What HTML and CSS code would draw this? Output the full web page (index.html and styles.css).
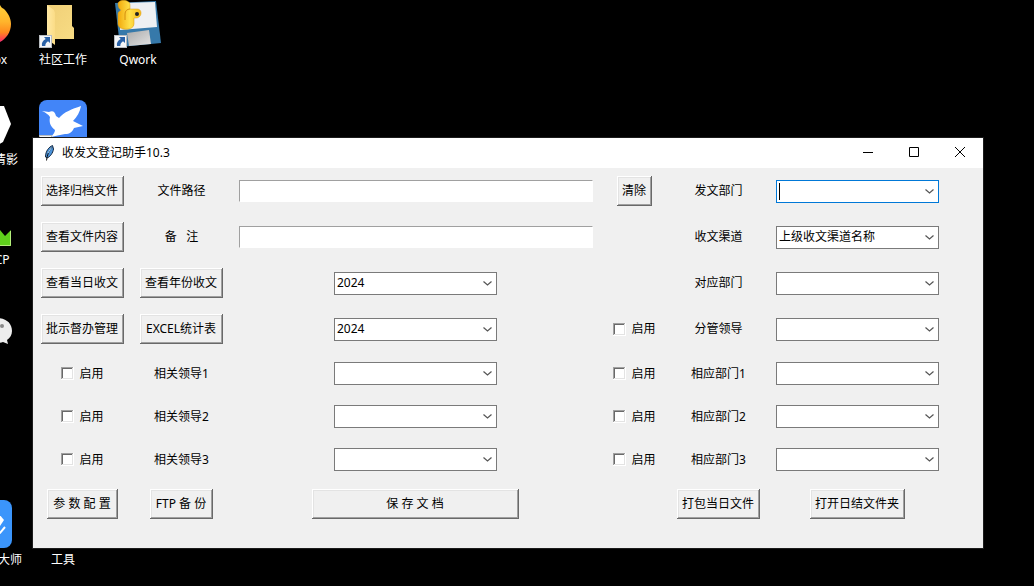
FILE: index.html
```html
<!DOCTYPE html>
<html lang="zh-CN">
<head>
  <meta charset="utf-8">
  <title>收发文登记助手10.3</title>
  <link rel="stylesheet" href="styles.css">
</head>
<body>
  <svg class="defs" width="0" height="0" aria-hidden="true">
    <defs>
      <linearGradient id="fire" x1="0" y1="0" x2="0" y2="1">
        <stop offset="0" stop-color="#ffd23a" />
        <stop offset=".45" stop-color="#ffb52c" />
        <stop offset=".7" stop-color="#ff8a1e" />
        <stop offset=".85" stop-color="#ff4a4a" />
        <stop offset="1" stop-color="#e0189a" />
      </linearGradient>
      <linearGradient id="folder" x1="0" y1="0" x2="1" y2="1">
        <stop stop-color="#f0cf77" />
        <stop offset="1" stop-color="#f8dc84" />
      </linearGradient>
      <linearGradient id="flap" x1="0" y1="0" x2="1" y2="0">
        <stop stop-color="#ffe9a4" />
        <stop offset="1" stop-color="#fbdc86" />
      </linearGradient>
      <linearGradient id="metal" x1="0" y1="0" x2="1" y2="1">
        <stop stop-color="#aaa" />
        <stop offset="1" stop-color="#e2e2e2" />
      </linearGradient>
      <linearGradient id="snake" x1="0" y1="0" x2="1" y2="0">
        <stop stop-color="#f2a90c" />
        <stop offset=".5" stop-color="#ffe04a" />
        <stop offset="1" stop-color="#f9bd18" />
      </linearGradient>
      <symbol id="shortcut" viewBox="0 0 13 13">
        <rect x=".5" y=".5" width="12" height="12" fill="#f4f6f8" stroke="#b8bcc0" />
        <path d="M5 2h6v6L9 6.300C7.200 7.500 6.300 9 6.300 11H3C2.300 8 3.800 5.500 6.700 4z" fill="#2a62a8" />
      </symbol>
    </defs>
  </svg>

  <div class="desktop">
    <div class="shortcut col-1 row-1">
      <svg viewBox="0 0 48 48"><path d="M36 5c1 2 2 3 4 4 4 4 7 9 7 15 0 8-5 15-11 18C20 50 0 40 0 24S20-2 36 5z" fill="url(#fire)" /></svg>
      <span>Firefox</span>
    </div>
    <div class="shortcut col-1 row-2 label-cut">
      <svg viewBox="0 0 48 48"><path d="M8 6h32l7 18-8 18-5 3H8L0 24z" fill="#fff" /></svg>
      <span>清影</span>
    </div>
    <div class="shortcut col-1 row-3">
      <svg viewBox="0 0 48 48"><path d="M20 20h16v12H20z" fill="#39424c" /><path d="M20 30h16l5 6 6-6v16H20z" fill="#5fd01c" /><path d="M20 45.500h26.500V31" fill="none" stroke="#b4ee7c" /></svg>
      <span>WinSCP</span>
    </div>
    <div class="shortcut col-1 row-4">
      <svg viewBox="0 0 48 48"><path d="M33 18c9 0 15 5 15 13 0 4-2 7-5 9l1 4-5-2c-12 4-22-2-22-11 0-8 7-13 16-13z" fill="#ededed" /><circle cx="38" cy="26" r="2" fill="#888" /></svg>
      <span>微信</span>
    </div>
    <div class="shortcut col-1 row-6 label-cut-less">
      <svg viewBox="0 0 48 48"><rect width="48" height="48" rx="8" fill="#3b95fb" /><path d="M34 13l6 7-4 6-10 6V16z" fill="#fff" /><path d="M28 36l8-3 5-6" fill="none" stroke="#fff" stroke-width="2" /></svg>
      <span>大师</span>
    </div>
    <div class="shortcut col-2 row-1">
      <svg viewBox="0 0 48 48">
        <path d="M8 5h25v21l2 2v11H8z" fill="url(#folder)" />
        <path d="M8 5l7 5 1 3v32l-8-6z" fill="url(#flap)" />
        <use href="#shortcut" x="0" y="35" width="13" height="13" />
      </svg>
      <span>社区工作</span>
    </div>
    <div class="shortcut col-2 row-2">
      <svg viewBox="0 0 48 48">
        <rect width="48" height="48" rx="8" fill="#4285f8" />
        <path d="M3 11l7 1c4-2 6 0 7 4l3 2c5-6 13-9 22-12-1 6-4 11-8 15l10 5-9 2c-2 4-4 6-9 6-5 1-10 2-14 3 2-2 4-5 4-7-5-4-6-8-5-13-2-3-4-4-8-6z" fill="#fff" />
        <use href="#shortcut" x="0" y="35" width="13" height="13" />
      </svg>
    </div>
    <div class="shortcut col-2 row-6">
      <svg viewBox="0 0 48 48"></svg>
      <span>工具</span>
    </div>
    <div class="shortcut col-3 row-1">
      <svg viewBox="0 0 48 48">
        <path d="M1 3l41-2 5 42-41 4z" fill="#3679aa" />
        <path d="M7 3l34-1 2 25-37 3z" fill="#eef0f2" />
        <path d="M13 33l22-3 2 14-22 2z" fill="url(#metal)" />
        <path d="M4 4c0-5 12-5 12 1v4h7c6 0 5 9-1 9h-2v6c0 7-16 7-16 0V14c0-3 3-3 3-4-2-1-3-3-3-6z" fill="url(#snake)" stroke="#d99812" stroke-width=".5" />
        <path d="M11 20v-6c0-3 2-5 5-5" fill="none" stroke="#d48f10" />
        <circle cx="23" cy="14" r="2" fill="#222" />
        <use href="#shortcut" x="0" y="35" width="13" height="13" />
      </svg>
      <span>Qwork</span>
    </div>
  </div>

  <main class="window">
    <header class="titlebar">
      <svg class="feather" width="12" height="16" viewBox="0 0 12 16">
        <path d="M9.500.500C6 2 2.500 6 2.500 12l1.500 1c3-1 6-5 6.500-9z" fill="#4b94dc" stroke="#14263c" />
        <path d="M9 2C6 6 4 10 3.500 15.500" fill="none" stroke="#111" />
        <path d="M8.500 2.500L5 8" stroke="#a9d4f5" />
      </svg>
      <h1>收发文登记助手10.3</h1>
      <button class="caption" type="button" aria-label="最小化"><svg width="10" height="10" viewBox="0 0 10 10"><path d="M0 5.500h10" /></svg></button>
      <button class="caption" type="button" aria-label="最大化"><svg width="10" height="10" viewBox="0 0 10 10"><path d="M.5.5h9v9h-9z" /></svg></button>
      <button class="caption" type="button" aria-label="关闭"><svg width="10" height="10" viewBox="0 0 10 10"><path d="M0 0l10 10M10 0L0 10" /></svg></button>
    </header>

    <form class="form">
      <!-- file -->
      <div class="row">
        <button class="btn" type="button">选择归档文件</button>
        <label for="path">文件路径</label>
        <input class="entry" id="path" type="text">
        <button class="btn" type="button">清除</button>
        <label for="send-dept">发文部门</label>
        <div class="combo-active"><select class="combo" id="send-dept"><option></option></select></div>
      </div>
      <div class="row">
        <button class="btn" type="button">查看文件内容</button>
        <label class="pre" for="note">备   注</label>
        <input class="entry" id="note" type="text">
        <span></span>
        <label for="channel">收文渠道</label>
        <select class="combo" id="channel"><option>上级收文渠道名称</option></select>
      </div>
      <div class="row">
        <button class="btn" type="button">查看当日收文</button>
        <button class="btn" type="button">查看年份收文</button>
        <select class="combo" aria-label="收文年份"><option>2024</option></select>
        <span></span>
        <label for="match-dept">对应部门</label>
        <select class="combo" id="match-dept"><option></option></select>
      </div>
      <div class="row">
        <button class="btn" type="button">批示督办管理</button>
        <button class="btn btn-stats" type="button">EXCEL统计表</button>
        <select class="combo" aria-label="统计年份"><option>2024</option></select>
        <label class="check"><input type="checkbox">启用</label>
        <label for="charge">分管领导</label>
        <select class="combo" id="charge"><option></option></select>
      </div>

      <!-- leaders and departments -->
      <div class="row row-short">
        <label class="check"><input type="checkbox">启用</label>
        <label for="leader1">相关领导1</label>
        <select class="combo" id="leader1"><option></option></select>
        <label class="check"><input type="checkbox">启用</label>
        <label for="dept1">相应部门1</label>
        <select class="combo" id="dept1"><option></option></select>
      </div>
      <div class="row row-short">
        <label class="check"><input type="checkbox">启用</label>
        <label for="leader2">相关领导2</label>
        <select class="combo" id="leader2"><option></option></select>
        <label class="check"><input type="checkbox">启用</label>
        <label for="dept2">相应部门2</label>
        <select class="combo" id="dept2"><option></option></select>
      </div>
      <div class="row row-short">
        <label class="check"><input type="checkbox">启用</label>
        <label for="leader3">相关领导3</label>
        <select class="combo" id="leader3"><option></option></select>
        <label class="check"><input type="checkbox">启用</label>
        <label for="dept3">相应部门3</label>
        <select class="combo" id="dept3"><option></option></select>
      </div>

      <div class="row">
        <button class="btn btn-config" type="button">参 数 配 置</button>
        <button class="btn btn-backup" type="button">FTP 备 份</button>
        <button class="btn btn-save" type="submit">保 存 文 档</button>
        <span></span>
        <button class="btn" type="button">打包当日文件</button>
        <button class="btn" type="button">打开日结文件夹</button>
      </div>
    </form>
  </main>
</body>
</html>
```

FILE: styles.css
```css
* {
  box-sizing: border-box;
}
body {
  margin: 0;
  min-height: 100vh;
  position: relative;
  overflow: hidden;
  background: #000;
  color: #000;
  font: 12px/16px "Noto Sans", "Noto Sans CJK SC", sans-serif;
}
button, input, select {
  font: inherit;
  color: inherit;
}
.defs {
  position: absolute;
}

/* desktop shortcuts */
.shortcut {
  position: absolute;
  width: 74px;
  display: flex;
  flex-direction: column;
  align-items: center;
  gap: 4px;
  color: #fff;
}
.shortcut svg {
  width: 48px;
  height: 48px;
}
.col-1 { left: -49px; }
.col-2 { left: 26px; }
.col-3 { left: 101px; }
.row-1 { top: 0; }
.row-2 { top: 100px; }
.row-3 { top: 200px; }
.row-4 { top: 300px; }
.row-6 { top: 500px; }
.label-cut span {
  align-self: flex-end;
  padding-right: 7px;
}
.label-cut-less span {
  align-self: flex-end;
  padding-right: 3px;
}

/* window */
.window {
  position: absolute;
  left: 33px;
  right: 51px;
  top: 138px;
  background: #f0f0f0;
  box-shadow: 0 0 0 1px #1c1c1c;
}
.titlebar {
  display: flex;
  align-items: center;
  height: 30px;
  padding-left: 10px;
  background: #fff;
}
.titlebar h1 {
  flex: 1;
  margin: 0 0 0 7px;
  font-size: 12px;
  font-weight: normal;
}
.caption {
  width: 46px;
  height: 30px;
  padding: 0 0 2px;
  border: 0;
  background: none;
  display: flex;
  align-items: center;
  justify-content: center;
}
.caption svg {
  fill: none;
  stroke: #000;
}
.caption:hover {
  background: #e5e5e5;
}

/* form */
.form {
  padding: 0 36px 21px 0;
}
.row {
  display: grid;
  grid-template-columns: 99fr 99fr 369fr 69fr 99fr 179fr;
  align-items: center;
  justify-items: center;
  height: 46px;
}
.row-short {
  height: 43px;
}
.pre {
  white-space: pre;
}
.btn {
  height: 30px;
  padding: 0 6px 0 5px;
  border: 0;
  background: #f0f0f0;
  white-space: nowrap;
  box-shadow: inset -1px -1px #696969, inset 1px 1px #fff, inset -2px -2px #a0a0a0, inset 2px 2px #e3e3e3;
}
.btn:active {
  box-shadow: inset 1px 1px #696969, inset -1px -1px #fff;
}
.btn-stats {
  min-width: 83px;
}
.btn-config {
  min-width: 71px;
}
.btn-backup {
  min-width: 63px;
}
.btn-save {
  width: 56%;
}
.entry {
  width: calc(100% - 15px);
  height: 22px;
  padding: 0 3px;
  border: 1px solid #fff;
  border-top-color: #a0a0a0;
  border-left-color: #a0a0a0;
  background: #fff;
  outline: none;
}
.combo {
  display: block;
  width: 163px;
  height: 23px;
  padding: 0 20px 0 2px;
  border: 1px solid #7a7a7a;
  border-radius: 0;
  appearance: none;
  outline: none;
  background: #fff url("data:image/svg+xml,%3Csvg xmlns='http://www.w3.org/2000/svg' width='9' height='5' viewBox='0 0 9 5'%3E%3Cpath d='M.5.5l4 3.500 4-3.500' fill='none' stroke='%23555' stroke-width='1.200'/%3E%3C/svg%3E") no-repeat right 4px center;
}
.combo-active {
  position: relative;
}
.combo-active .combo {
  border-color: #0078d7;
}
/* text cursor */
.combo-active::before {
  content: "";
  position: absolute;
  left: 3px;
  top: 3px;
  width: 1px;
  height: 17px;
  background: #000;
}
.check {
  display: flex;
  align-items: center;
  gap: 5px;
}
.check input {
  width: 13px;
  height: 13px;
  margin: 0;
  appearance: none;
  background: #fff;
  box-shadow: inset -1px -1px #fff, inset 1px 1px #a0a0a0, inset -2px -2px #e3e3e3, inset 2px 2px #696969;
}
.check input:checked::before {
  content: "✓";
  display: block;
  font-size: 10px;
  line-height: 13px;
  text-align: center;
}
```
